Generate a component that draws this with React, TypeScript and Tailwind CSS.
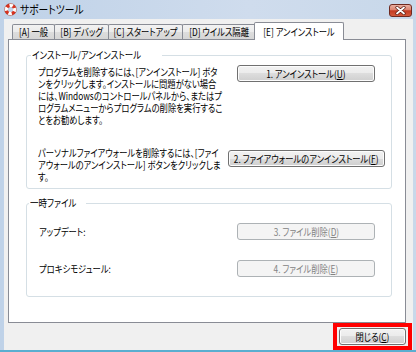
import React from "react";

const jp = "font-['Noto_Sans_CJK_JP','Noto_Sans',sans-serif] [font-feature-settings:'palt']";

function C({ children }: { children: React.ReactNode }) {
  return <span className="inline-block scale-x-[0.83]">{children}</span>;
}

function Btn({ children, disabled, w }: { children: React.ReactNode; disabled?: boolean; w: string }) {
  const base =
    "h-[17px] rounded-[3px] border flex items-center justify-center text-[10px] leading-none whitespace-nowrap " + w;
  if (disabled) {
    return (
      <div className={base + " border-[#adb2b5] bg-[#f4f4f4] text-[#838383]"}>
        <C>{children}</C>
      </div>
    );
  }
  return (
    <div
      className={
        base +
        " border-[#707070] text-black bg-[linear-gradient(to_bottom,#f2f2f2_0%,#ebebeb_50%,#dddddd_50%,#cfcfcf_100%)] shadow-[inset_0_0_0_1px_#fcfcfc]"
      }
    >
      <C>{children}</C>
    </div>
  );
}

function Tab({ children, w, first, selected }: { children: React.ReactNode; w: string; first?: boolean; selected?: boolean }) {
  if (selected) {
    return (
      <div
        className={
          "relative z-10 -ml-[3px] -mb-px h-[18px] border border-b-0 border-[#898c95] rounded-t-[2px] bg-white flex items-center justify-center text-[10px] leading-none whitespace-nowrap " +
          w
        }
      >
        <C>{children}</C>
      </div>
    );
  }
  return (
    <div
      className={
        (first ? "" : "-ml-px ") +
        "h-[15px] border border-b-0 border-[#898c95] rounded-t-[2px] bg-[linear-gradient(to_bottom,#f2f2f2_0%,#ebebeb_50%,#dddddd_50%,#d6d6d6_100%)] flex items-center justify-center text-[10px] leading-none whitespace-nowrap " +
        w
      }
    >
      <C>{children}</C>
    </div>
  );
}

function Para({ lines }: { lines: string[] }) {
  return (
    <div className="origin-left scale-x-[0.83] text-[10px] leading-[12px] whitespace-nowrap">
      {lines.map((l) => (
        <div key={l}>{l}</div>
      ))}
    </div>
  );
}

function Lifebuoy() {
  return (
    <svg width="13" height="13" viewBox="0 0 13 13">
      <circle cx="6.5" cy="6.5" r="4.3" fill="none" stroke="#d8321f" strokeWidth="3.4" />
      <circle
        cx="6.5"
        cy="6.5"
        r="4.3"
        fill="none"
        stroke="#ffffff"
        strokeWidth="3.4"
        strokeDasharray="3.4 3.35"
        transform="rotate(-20 6.5 6.5)"
      />
      <circle cx="6.5" cy="6.5" r="6" fill="none" stroke="#8a2a1e" strokeWidth="0.6" opacity="0.6" />
    </svg>
  );
}

function CloseX() {
  return (
    <svg width="11" height="9" viewBox="0 0 11 9">
      <path d="M2 1.5 L9 7.5 M9 1.5 L2 7.5" stroke="#5a1c14" strokeWidth="3.2" strokeLinecap="round" />
      <path d="M2 1.5 L9 7.5 M9 1.5 L2 7.5" stroke="#ffffff" strokeWidth="1.8" strokeLinecap="round" />
    </svg>
  );
}

export default function App() {
  return (
    <div
      className={
        "w-[416px] h-[352px] overflow-hidden flex flex-col border-b-2 border-[#5aaed0] bg-[linear-gradient(to_right,#bfd2e8,#cfdced_60%,#c8d8ea)] text-black " +
        jp
      }
    >
      {/* Title bar */}
      <div className="h-[19px] flex items-start pl-[4px] pr-[4px] pt-[3px]">
        <Lifebuoy />
        <div className="ml-[3px] text-[11.5px] leading-[13px] text-black">
          <span className="inline-block origin-left scale-x-[0.85]">サポートツール</span>
        </div>
        <div className="ml-auto mt-[1px] w-[23px] h-[13px] rounded-[3px] border border-[#6f2a20] flex items-center justify-center bg-[linear-gradient(to_bottom,#eab0a2_0%,#dc8470_45%,#c23a22_52%,#d45a3c_100%)]">
          <CloseX />
        </div>
      </div>

      {/* Client area */}
      <div className="ml-[4px] w-[409px] h-[331px] bg-[#f0f0f0] flex flex-col pl-[4px] pt-[3px]">
        {/* Tabs */}
        <div className="flex items-end h-[17px] pl-[4px]">
          <Tab first w="w-[43px]">[A] 一般</Tab>
          <Tab w="w-[55px]">[B] デバッグ</Tab>
          <Tab w="w-[75px]">[C] スタートアップ</Tab>
          <Tab w="w-[75px]">[D] ウイルス隔離</Tab>
          <Tab selected w="w-[90px]">[E] アンインストール</Tab>
        </div>

        {/* Panel */}
        <div className="w-[398px] h-[284px] border border-[#898c95] bg-white pl-[17px]">
          {/* Group 1 */}
          <fieldset className="mt-[9px] w-[366px] border border-[#d5dfe5] rounded-[3px]">
            <legend className="ml-[4px] px-[1px] text-[10px] leading-[12px] whitespace-nowrap">
              <span className="inline-block origin-left scale-x-[0.85]">インストール/アンインストール</span>
            </legend>
            <div className="pl-[11px] pr-[5px] pb-[5px]">
              <div className="flex items-start pt-[4px]">
                <div className="w-[188px] mt-[1px]">
                  <Para
                    lines={[
                      "プログラムを削除するには、[アンインストール] ボタ",
                      "ンをクリックします。インストールに問題がない場合",
                      "には、Windowsのコントロールパネルから、またはプ",
                      "ログラムメニューからプログラムの削除を実行するこ",
                      "とをお勧めします。",
                    ]}
                  />
                </div>
                <div className="w-[160px] flex justify-center">
                  <Btn w="w-[138px]">
                    1. アンインストール(<span className="underline">U</span>)
                  </Btn>
                </div>
              </div>
              <div className="flex items-start mt-[21px]">
                <div className="w-[188px]">
                  <Para
                    lines={[
                      "パーソナルファイアウォールを削除するには、[ファイ",
                      "アウォールのアンインストール] ボタンをクリックしま",
                      "す。",
                    ]}
                  />
                </div>
                <div className="w-[160px] flex justify-center mt-[3px]">
                  <Btn w="w-[157px]">
                    2. ファイアウォールのアンインストール(<span className="underline">F</span>)
                  </Btn>
                </div>
              </div>
            </div>
          </fieldset>

          {/* Group 2 */}
          <fieldset className="mt-[8px] w-[366px] border border-[#d5dfe5] rounded-[3px]">
            <legend className="ml-[2px] px-[1px] text-[10px] leading-[12px] whitespace-nowrap">
              <span className="inline-block origin-left scale-x-[0.85]">一時ファイル</span>
            </legend>
            <div className="pl-[12px] pr-[5px] pb-[19px]">
              <div className="flex items-center pt-[14px]">
                <div className="w-[187px]">
                  <Para lines={["アップデート:"]} />
                </div>
                <div className="w-[160px] flex justify-center">
                  <Btn disabled w="w-[138px]">
                    3. ファイル削除(<span className="underline">D</span>)
                  </Btn>
                </div>
              </div>
              <div className="flex items-center mt-[20px]">
                <div className="w-[187px]">
                  <Para lines={["プロキシモジュール:"]} />
                </div>
                <div className="w-[160px] flex justify-center">
                  <Btn disabled w="w-[138px]">
                    4. ファイル削除(<span className="underline">E</span>)
                  </Btn>
                </div>
              </div>
            </div>
          </fieldset>
        </div>

        {/* Footer */}
        <div className="flex justify-end pr-[1px]">
          <div className="border-[4px] border-[#ff0000] px-[2px] py-[1px]">
            <Btn w="w-[67px]">
              閉じる(<span className="underline">C</span>)
            </Btn>
          </div>
        </div>
      </div>
    </div>
  );
}
